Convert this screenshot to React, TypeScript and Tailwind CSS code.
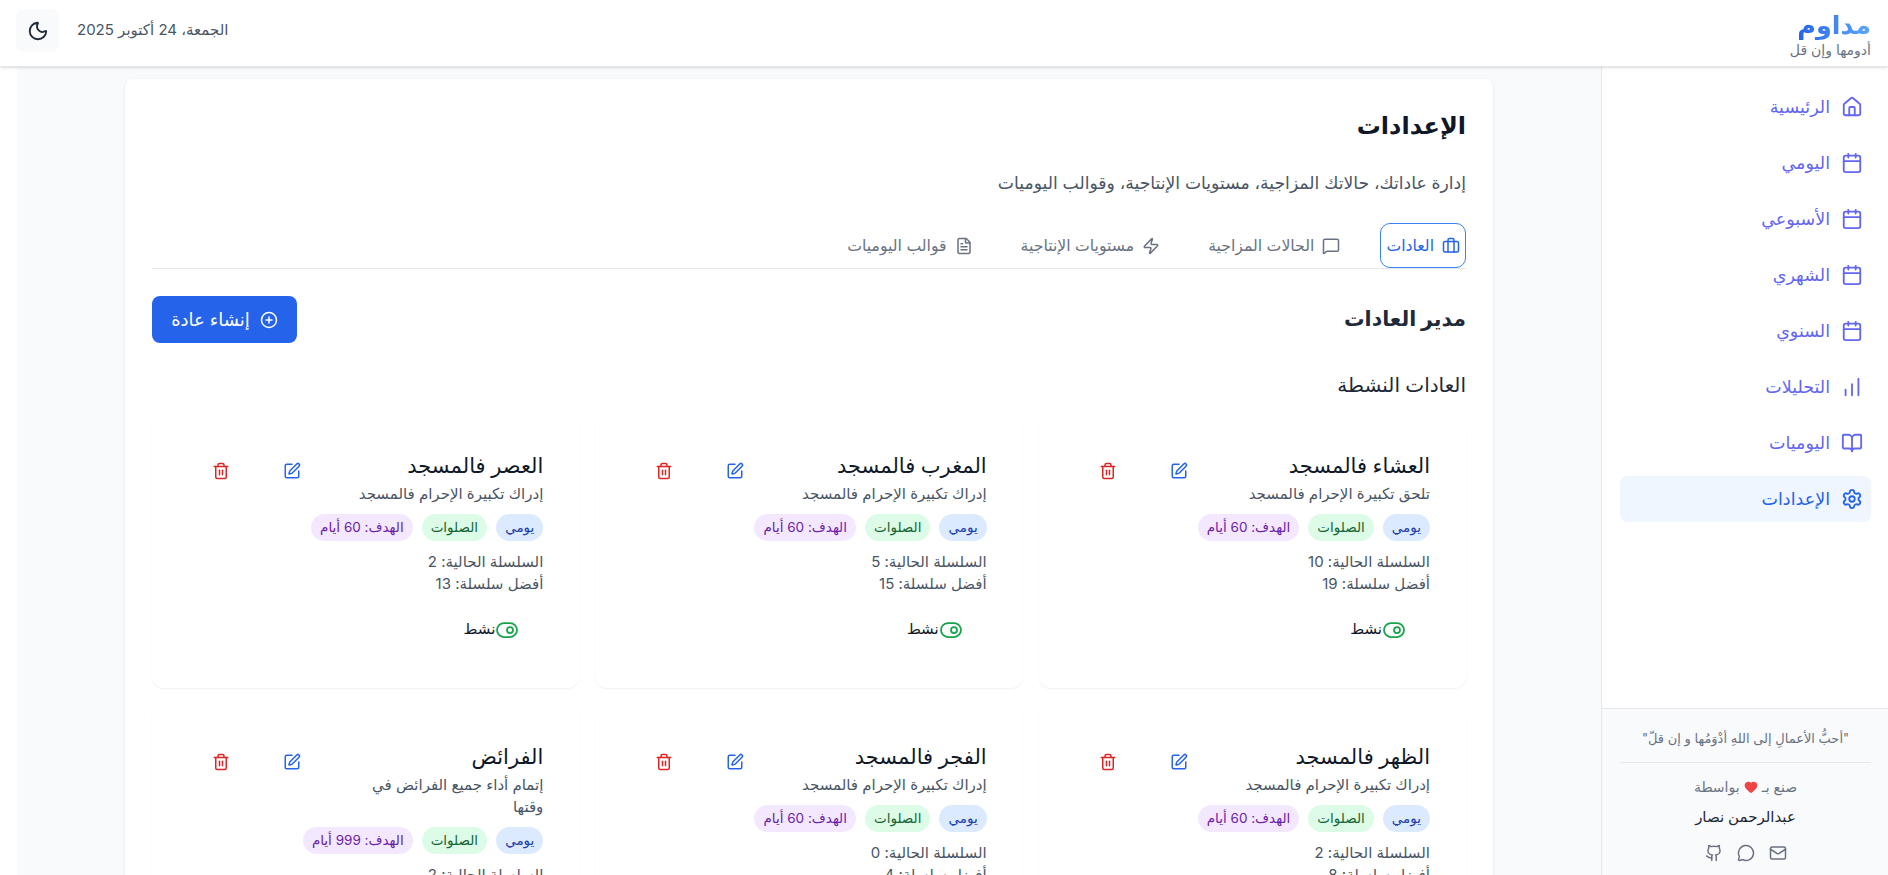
import { BookOpen, Briefcase, Calendar, ChartNoAxesColumnIncreasing, CirclePlus, FileText, Github, Heart, Home, Mail, MessageCircle, MessageSquare, Moon, Settings, SquarePen, ToggleRight, Trash2, Zap } from 'lucide-react';

const NAV_ITEMS = [
  { icon: Home, label: 'الرئيسية' },
  { icon: Calendar, label: 'اليومي' },
  { icon: Calendar, label: 'الأسبوعي' },
  { icon: Calendar, label: 'الشهري' },
  { icon: Calendar, label: 'السنوي' },
  { icon: ChartNoAxesColumnIncreasing, label: 'التحليلات' },
  { icon: BookOpen, label: 'اليوميات' },
  { icon: Settings, label: 'الإعدادات', active: true },
];

const TABS = [
  { icon: Briefcase, label: 'العادات', active: true },
  { icon: MessageSquare, label: 'الحالات المزاجية' },
  { icon: Zap, label: 'مستويات الإنتاجية' },
  { icon: FileText, label: 'قوالب اليوميات' },
];

const HABITS = [
  { name: 'العشاء فالمسجد', desc: 'تلحق تكبيرة الإحرام فالمسجد', goal: 60, current: 10, best: 19 },
  { name: 'المغرب فالمسجد', desc: 'إدراك تكبيرة الإحرام فالمسجد', goal: 60, current: 5, best: 15 },
  { name: 'العصر فالمسجد', desc: 'إدراك تكبيرة الإحرام فالمسجد', goal: 60, current: 2, best: 13 },
  { name: 'الظهر فالمسجد', desc: 'إدراك تكبيرة الإحرام فالمسجد', goal: 60, current: 2, best: 8 },
  { name: 'الفجر فالمسجد', desc: 'إدراك تكبيرة الإحرام فالمسجد', goal: 60, current: 0, best: 4 },
  { name: 'الفرائض', desc: 'إتمام أداء جميع الفرائض في وقتها', goal: 999, current: 2, best: 8 },
];

function HabitCard({ habit }: { habit: (typeof HABITS)[number] }) {
  return (
    <div className="bg-white rounded-xl shadow-[0_1px_2px_rgba(0,0,0,0.06)] px-9 pt-[37px] pb-[46px]">
      <div className="flex justify-between items-start">
        <div className="w-[177px] shrink-0 grow">
          <h4 className="text-[21px] leading-7 font-medium text-gray-900">{habit.name}</h4>
          <p className="mt-[3px] text-[15px] leading-[22px] text-gray-600 w-[200px]">{habit.desc}</p>
          <div className="flex gap-[9px] mt-[9px] w-[300px]">
            <span className="h-[27px] px-[9px] rounded-full bg-[#dbeafe] text-[#1e40af] text-[13.5px] leading-[27px]">يومي</span>
            <span className="h-[27px] px-[9px] rounded-full bg-[#dcfce7] text-[#166534] text-[13.5px] leading-[27px]">الصلوات</span>
            <span className="h-[27px] px-[9px] rounded-full bg-[#f3e8ff] text-[#6b21a8] text-[13.5px] leading-[27px]">الهدف: {habit.goal} أيام</span>
          </div>
          <div className="mt-[10px] text-[15px] leading-[22px] text-gray-600">
            <p>السلسلة الحالية: {habit.current}</p>
            <p>أفضل سلسلة: {habit.best}</p>
          </div>
          <div className="flex items-center h-[25px] mt-[22px] mr-6 text-[15px] text-gray-900">
            <ToggleRight size={24} className="text-[#16a34a]" strokeWidth={1.75} />
            <span>نشط</span>
          </div>
        </div>
        <div className="flex gap-[53px] pl-6 pt-[10px]">
          <SquarePen size={18} className="text-[#2563eb]" />
          <Trash2 size={18} className="text-[#dc2626]" />
        </div>
      </div>
    </div>
  );
}

export default function App() {
  return (
    <div dir="rtl" className="h-screen flex flex-col bg-white font-['Inter','DejaVu_Sans',sans-serif] overflow-hidden">
      <header className="h-[67px] shrink-0 bg-white border-b border-gray-200 shadow-sm flex items-center justify-between pr-[17px] pl-4 pb-[5px] z-10">
        <div className="pt-2">
          <div className="w-fit text-[25.5px] leading-[30px] font-bold bg-linear-to-r from-[#2563eb] to-[#60a5fa] bg-clip-text text-transparent">مداوم</div>
          <div className="text-sm leading-5 text-gray-500">أدومها وإن قل</div>
        </div>
        <div className="flex items-center gap-[18px]">
          <span className="text-[15px] text-gray-600">الجمعة، 24 أكتوبر 2025</span>
          <button className="w-[43px] h-[43px] rounded-lg bg-gray-50 flex items-center justify-center text-gray-800">
            <Moon size={22} />
          </button>
        </div>
      </header>

      <div className="flex-1 flex min-h-0">
        <aside className="w-[287px] shrink-0 bg-white border-l border-gray-200 flex flex-col">
          <nav className="flex-1 pr-[17px] pl-[18px] pt-[17px] space-y-[10px]">
            {NAV_ITEMS.map(({ icon: Icon, label, active }) => (
              <a key={label} className={`flex items-center gap-[11px] h-[46px] px-2 rounded-lg text-[17.5px] ${active ? 'bg-[#eff6ff] text-[#2563eb]' : 'text-[#6366f1]'}`}>
                <Icon size={22} />
                {label}
              </a>
            ))}
          </nav>
          <div className="h-[167px] bg-gray-50 border-t border-gray-200 pr-[17px] pl-[18px] pt-[19px] text-center">
            <p className="text-[13px] leading-5 text-gray-500 pb-[14px] border-b border-gray-200">"أحبُّ الأعمالِ إلى اللهِ أدْوَمُها و إن قلّ"</p>
            <p className="flex justify-center items-center gap-1 mt-[14px] text-sm leading-5 text-gray-500">
              صنع بـ <Heart size={14} className="text-[#ef4444] fill-[#ef4444]" /> بواسطة
            </p>
            <p className="mt-2 text-[15px] leading-6 font-medium text-gray-800">عبدالرحمن نصار</p>
            <div className="flex justify-center gap-[14px] mt-[15px] text-gray-500">
              <Mail size={18} />
              <MessageCircle size={18} />
              <Github size={18} />
            </div>
          </div>
        </aside>

        <main className="flex-1 min-w-0 overflow-hidden bg-gray-50 pt-3 px-[108px]">
          <div className="bg-white rounded-lg shadow-sm px-[27px] pt-[31px]">
            <h1 className="text-2xl leading-8 font-bold text-gray-900">الإعدادات</h1>
            <p className="mt-[29px] text-[17.2px] leading-6 text-gray-600">إدارة عاداتك، حالاتك المزاجية، مستويات الإنتاجية، وقوالب اليوميات</p>
            <div className="flex gap-8 mt-7 border-b border-gray-200 h-[46px]">
              {TABS.map(({ icon: Icon, label, active }) => (
                <div key={label} className={`h-[45px] rounded-[10px] flex items-center gap-2 text-[15.7px] ${active ? 'px-[5px] border border-[#3b82f6] text-[#2563eb]' : 'px-2 text-gray-500'}`}>
                  <Icon size={18} />
                  {label}
                </div>
              ))}
            </div>
            <div className="flex items-center justify-between mt-[27px]">
              <h2 className="text-[20.5px] font-bold text-gray-800">مدير العادات</h2>
              <button className="h-[47px] w-[145px] bg-[#2563eb] text-white text-lg rounded-lg flex items-center justify-center gap-[10px]">
                <CirclePlus size={18} />
                إنشاء عادة
              </button>
            </div>
            <h3 className="mt-7 text-xl leading-7 font-medium text-gray-800">العادات النشطة</h3>
            <div className="grid grid-cols-3 gap-x-4 gap-y-[18px] mt-4">
              {HABITS.map((h) => <HabitCard key={h.name} habit={h} />)}
            </div>
          </div>
        </main>

        {/* scrollbar gutter */}
        <div className="w-[17px] shrink-0 bg-white" />
      </div>
    </div>
  );
}
